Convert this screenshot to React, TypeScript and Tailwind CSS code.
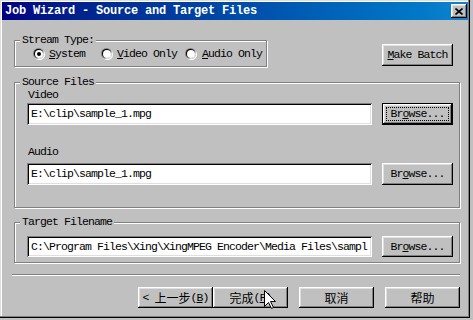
import React from "react";

const raised =
  "shadow-[inset_-1px_-1px_0_#000,inset_1px_1px_0_#fff,inset_-2px_-2px_0_#808080,inset_2px_2px_0_#dfdfdf]";
const sunken =
  "shadow-[inset_1px_1px_0_#808080,inset_-1px_-1px_0_#fff,inset_2px_2px_0_#000,inset_-2px_-2px_0_#dfdfdf]";
const etched = "border border-[#808080] shadow-[1px_1px_0_#fff,inset_1px_1px_0_#fff]";
const mono = "font-['Liberation_Mono',monospace] text-[11.5px] tracking-[-0.9px] leading-[12px] text-black whitespace-pre";
const cjk = "font-['Noto_Sans_CJK_SC',sans-serif] text-[12px] leading-[12px] tracking-normal";

function Radio({ checked }: { checked?: boolean }) {
  return (
    <svg width="12" height="12" viewBox="0 0 12 12" className="shrink-0">
      <circle cx="6.5" cy="6.5" r="5.5" fill="#fff" />
      <circle cx="5.5" cy="5.5" r="5.5" fill="#808080" />
      <circle cx="6.5" cy="6.5" r="4.5" fill="#dfdfdf" />
      <circle cx="5.5" cy="5.5" r="4.5" fill="#000" />
      <circle cx="6" cy="6" r="4" fill="#fff" />
      {checked && <circle cx="6" cy="6" r="2" fill="#000" />}
    </svg>
  );
}

function Legend({ children }: { children: React.ReactNode }) {
  return (
    <span className={`absolute left-[5px] top-[-7px] px-[2px] bg-[#c0c0c0] ${mono}`}>{children}</span>
  );
}

function U({ children }: { children: React.ReactNode }) {
  return <span className="underline decoration-1 underline-offset-[1px]">{children}</span>;
}

function Field({ text, className }: { text: string; className?: string }) {
  return (
    <div className={`bg-white ${sunken} flex items-center pl-[4px] overflow-hidden ${className ?? ""}`}>
      <span className={mono}>{text}</span>
    </div>
  );
}

function BrowseBtn({ focused, className }: { focused?: boolean; className?: string }) {
  if (focused) {
    return (
      <div className={`w-[71px] border border-black bg-[#c0c0c0] ${raised} flex p-[3px] ${className ?? ""}`}>
        <div className="flex-1 border border-dotted border-black flex items-center justify-center">
          <span className={mono}>
            Br<U>o</U>wse...
          </span>
        </div>
      </div>
    );
  }
  return (
    <div className={`w-[71px] bg-[#c0c0c0] ${raised} flex items-center justify-center ${className ?? ""}`}>
      <span className={mono}>
        Br<U>o</U>wse...
      </span>
    </div>
  );
}

export default function App() {
  return (
    <div className="relative w-[473px] h-[320px] bg-[#c0c0c0] overflow-hidden">
      <div className="w-[470px] h-[318px] flex flex-col shadow-[inset_-1px_-1px_0_#000,inset_-2px_-2px_0_#808080,inset_1px_1px_0_#dfdfdf,inset_2px_2px_0_#fff]">
        {/* Title bar */}
        <div className="mx-[2px] mt-[2px] h-[18px] flex items-center bg-linear-to-r from-[#000080] to-[#1084d0]">
          <span className="pl-[3px] font-['Liberation_Mono',monospace] font-bold text-[12px] tracking-[-0.2px] leading-[14px] text-white whitespace-pre">
            Job Wizard - Source and Target Files
          </span>
          <div className={`ml-auto mr-[1px] w-[16px] h-[14px] bg-[#c0c0c0] ${raised} flex items-center justify-center`}>
            <svg width="8" height="7" viewBox="0 0 8 7">
              <path d="M0.5 0.5 L7.5 6.5 M7.5 0.5 L0.5 6.5" stroke="#000" strokeWidth="1.6" fill="none" />
            </svg>
          </div>
        </div>

        {/* Stream type row */}
        <div className="mt-[20px] ml-[14px] flex items-start">
          <div className={`relative w-[253px] h-[27px] ${etched} flex items-center pl-[18px]`}>
            <Legend>Stream Type:</Legend>
            <div className="w-[68px] flex items-center gap-[4px]">
              <Radio checked />
              <span className={mono}>
                <U>S</U>ystem
              </span>
            </div>
            <div className="w-[84px] flex items-center gap-[4px]">
              <Radio />
              <span className={mono}>
                <U>V</U>ideo Only
              </span>
            </div>
            <div className="flex items-center gap-[5px]">
              <Radio />
              <span className={mono}>
                <U>A</U>udio Only
              </span>
            </div>
          </div>
          <div className={`ml-[115px] mt-[4px] w-[71px] h-[22px] bg-[#c0c0c0] ${raised} flex items-center justify-center`}>
            <span className={mono}>
              <U>M</U>ake Batch
            </span>
          </div>
        </div>

        {/* Source files */}
        <div className={`relative mt-[15px] ml-[14px] w-[446px] h-[126px] ${etched} flex flex-col`}>
          <Legend>Source Files</Legend>
          <span className={`mt-[6px] ml-[13px] ${mono}`}>Video</span>
          <div className="mt-[2px] ml-[12px] flex">
            <Field text={"E:\\clip\\sample_1.mpg"} className="w-[345px] h-[22px]" />
            <BrowseBtn focused className="ml-[10px] h-[22px]" />
          </div>
          <span className={`mt-[21px] ml-[13px] ${mono}`}>Audio</span>
          <div className="mt-[5px] ml-[12px] flex">
            <Field text={"E:\\clip\\sample_1.mpg"} className="w-[345px] h-[22px]" />
            <BrowseBtn className="ml-[10px] h-[22px]" />
          </div>
        </div>

        {/* Target filename */}
        <div className={`relative mt-[14px] ml-[14px] w-[446px] h-[41px] ${etched} flex flex-col`}>
          <Legend>Target Filename</Legend>
          <div className="mt-[13px] ml-[12px] flex">
            <Field
              text={"C:\\Program Files\\Xing\\XingMPEG Encoder\\Media Files\\sampl"}
              className="w-[345px] h-[21px]"
            />
            <BrowseBtn className="ml-[10px] h-[21px]" />
          </div>
        </div>

        {/* Separator */}
        <div className="mt-[11px] ml-[12px] w-[448px] h-0 border-t border-t-[#808080] border-b border-b-white" />

        {/* Bottom buttons */}
        <div className="mt-[11px] ml-[138px] flex">
          <div className={`w-[75px] h-[21px] bg-[#c0c0c0] ${raised} flex items-center justify-center`}>
            <span className={mono}>{"< "}</span>
            <span className={cjk}>上一步</span>
            <span className={mono}>
              (<U>B</U>)
            </span>
          </div>
          <div className={`w-[75px] h-[21px] bg-[#c0c0c0] ${raised} flex items-center justify-center`}>
            <span className={cjk}>完成</span>
            <span className={mono}>
              (<U>F</U>)
            </span>
          </div>
          <div className={`ml-[11px] w-[75px] h-[21px] bg-[#c0c0c0] ${raised} flex items-center justify-center`}>
            <span className={cjk}>取消</span>
          </div>
          <div className={`ml-[11px] w-[75px] h-[21px] bg-[#c0c0c0] ${raised} flex items-center justify-center`}>
            <span className={cjk}>帮助</span>
          </div>
        </div>
      </div>

      {/* Mouse cursor */}
      <svg className="absolute left-[264px] top-[290px]" width="13" height="20" viewBox="0 0 13 20">
        <path
          d="M0.5 0.5 L0.5 16.5 L4.5 12.5 L7.5 18.5 L9.5 17.5 L6.5 11.5 L11.5 11.5 Z"
          fill="#fff"
          stroke="#000"
          strokeWidth="1"
          strokeLinejoin="miter"
        />
      </svg>
    </div>
  );
}
